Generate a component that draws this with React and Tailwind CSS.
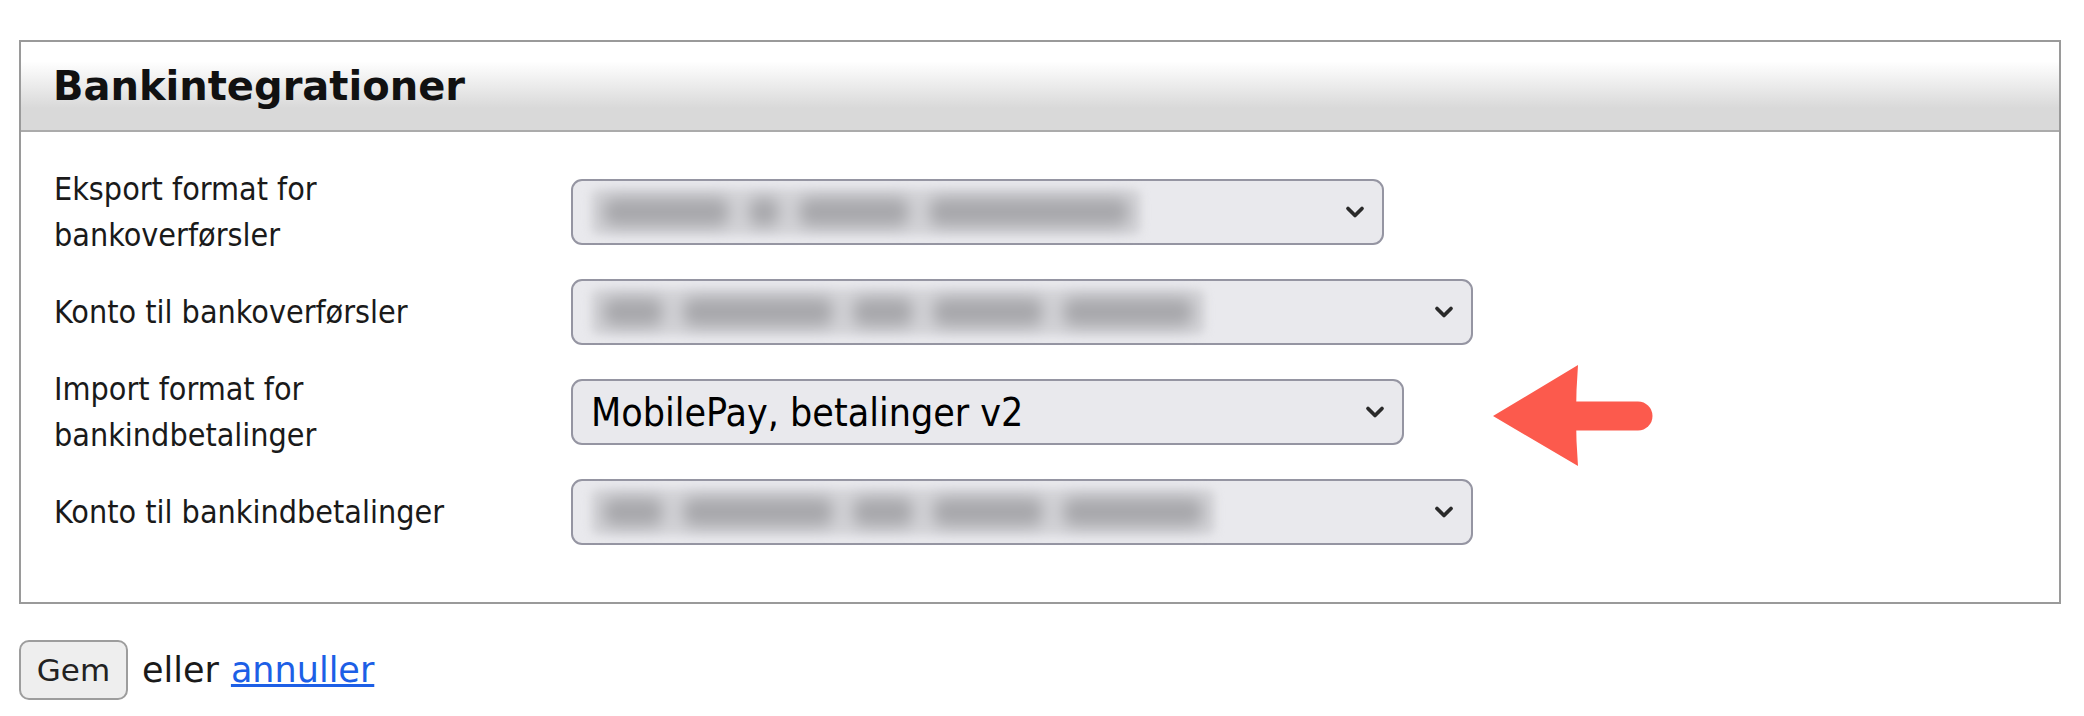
import { ChevronDown } from 'lucide-react'

const rows = [
  {
    label: ['Eksport format for', 'bankoverførsler'],
    width: 'w-[813px]',
    blur: [126, 30, 110, 200],
  },
  {
    label: ['Konto til bankoverførsler'],
    width: 'w-[902px]',
    blur: [60, 150, 60, 110, 130],
  },
  {
    label: ['Import format for', 'bankindbetalinger'],
    width: 'w-[833px]',
    value: 'MobilePay, betalinger v2',
  },
  {
    label: ['Konto til bankindbetalinger'],
    width: 'w-[902px]',
    blur: [60, 150, 60, 110, 140],
  },
]

function BlurredValue({ parts }) {
  return (
    <div className="relative flex items-center h-[46px] px-[12px] gap-[20px] rounded-[8px] bg-[#d4d4d8] blur-[4px]">
      {parts.map((w, i) => (
        <span
          key={i}
          className="h-[28px] rounded-[10px] bg-[#a6a6aa] blur-[7px]"
          style={{ width: w }}
        />
      ))}
    </div>
  )
}

function Select({ row }) {
  return (
    <div
      className={`${row.width} h-[66px] flex items-center justify-between pl-[18px] pr-[13px] rounded-[11px] border-2 border-[#9595a2] bg-[#e9e9ed]`}
    >
      {row.value ? (
        <span className="text-[39px] leading-none text-black font-['DejaVu_Sans_Condensed','DejaVu_Sans',sans-serif]">
          {row.value}
        </span>
      ) : (
        <BlurredValue parts={row.blur} />
      )}
      <ChevronDown className="w-[28px] h-[28px] text-[#2a2a2a]" strokeWidth={3.2} />
    </div>
  )
}

export default function App() {
  return (
    <div className="min-h-screen bg-white pt-[40px] pl-[19px] pr-[23px] font-['DejaVu_Sans',Verdana,sans-serif] text-[#1a1a1a]">
      <div className="relative border-2 border-[#9a9a9a]">
        <div className="h-[90px] flex items-center pl-[32px] border-b-2 border-[#ababab] bg-[linear-gradient(to_bottom,#ffffff_22%,#d9d9d9_75%)]">
          <h1 className="text-[40px] font-bold text-[#111]">Bankintegrationer</h1>
        </div>

        <div className="pt-[30px] pb-[40px] pl-[33px]">
          {rows.map((row, i) => (
            <div key={i} className="h-[100px] flex items-center">
              <div className="w-[517px] text-[32px] leading-[46px] font-['DejaVu_Sans_Condensed','DejaVu_Sans',sans-serif]">
                {row.label.map((l) => (
                  <div key={l}>{l}</div>
                ))}
              </div>
              <Select row={row} />
            </div>
          ))}
        </div>

        <svg
          className="absolute left-[1469px] top-[320px]"
          width="166"
          height="108"
          viewBox="0 0 166 108"
        >
          <path d="M3 54 L88 3 Q84 54 88 104 Z" fill="#fc5a4d" />
          <path d="M84 39.5 H148 a14.5 14.5 0 0 1 0 29 H84 Z" fill="#fc5a4d" />
        </svg>
      </div>

      <div className="mt-[36px] flex items-center text-[35px]">
        <button className="w-[109px] h-[60px] rounded-[10px] border-2 border-[#9d9d9d] bg-[#eeeeee] text-[31px] text-[#222]">
          Gem
        </button>
        <span className="ml-[14px]">eller</span>
        <a href="#" className="ml-[12px] text-[#1d5fe6] underline">
          annuller
        </a>
      </div>
    </div>
  )
}
